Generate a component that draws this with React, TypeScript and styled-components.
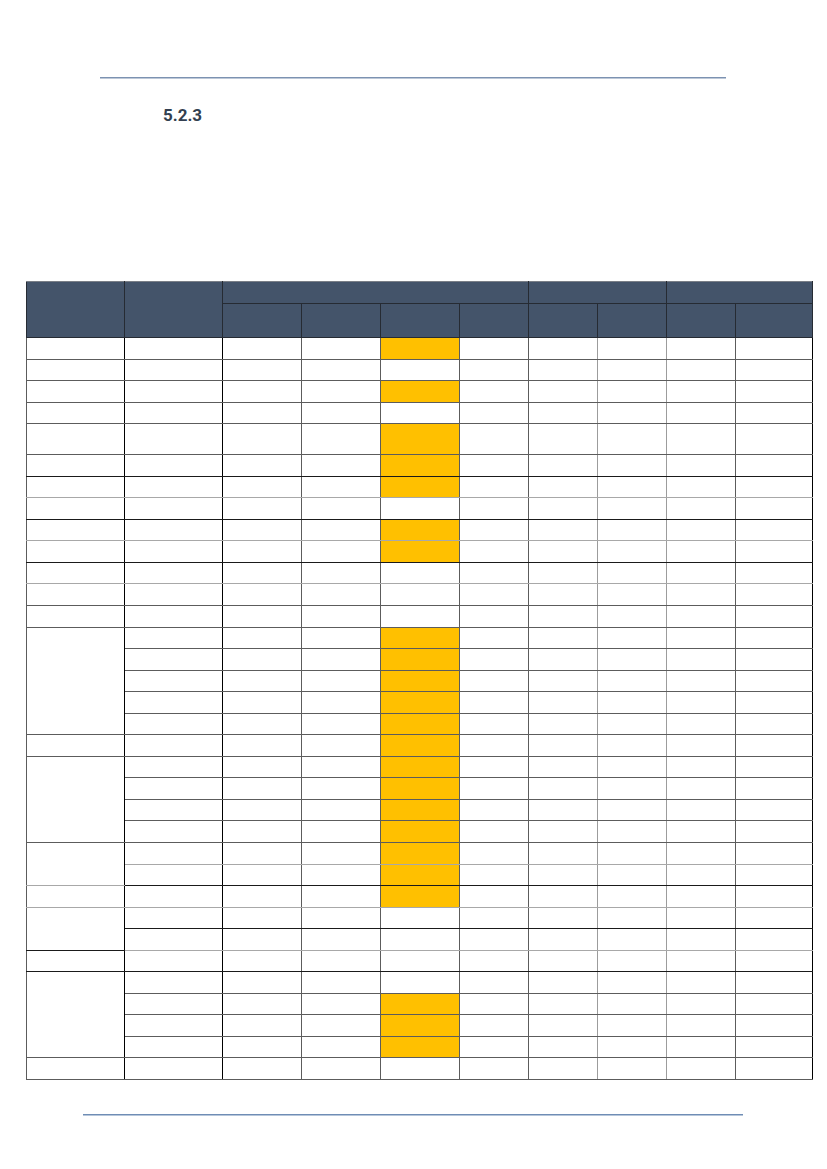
import styled, { createGlobalStyle } from 'styled-components';

const GlobalStyle = createGlobalStyle`
  html, body {
    margin: 0;
    padding: 0;
    background: #ffffff;
  }
  body {
    font-family: Roboto, "Liberation Sans", sans-serif;
  }
`;

const Page = styled.div`
  width: 827px;
  min-height: 1169px;
  padding-top: 77px;
  box-sizing: border-box;
  background: #ffffff;
`;

const Rule = styled.div<{ $left: number; $width: number; $color: string; $gap?: number }>`
  margin: ${(p) => p.$gap ?? 0}px 0 0 ${(p) => p.$left}px;
  width: ${(p) => p.$width}px;
  height: 1px;
  background: ${(p) => p.$color};
  box-shadow: 0 0.5px 0 ${(p) => p.$color};
`;

const Heading = styled.h3`
  margin: 27px 0 0 163px;
  font-family: Roboto, "Liberation Sans", sans-serif;
  font-size: 17px;
  line-height: 20px;
  font-weight: 700;
  color: #333f50;
`;

const Table = styled.table`
  margin: 156px 0 0 26px;
  border-collapse: collapse;
  table-layout: fixed;
  width: 786px;
`;

const HeadRow = styled.tr<{ $h: number }>`
  height: ${(p) => p.$h}px;
`;

const HeadCell = styled.th`
  background: #44546a;
  border: 1px solid #262b33;
  border-top-color: #7a7f87;
  padding: 0;
`;

const BodyRow = styled.tr<{ $h: number; $line?: 'dark' | 'light' }>`
  height: ${(p) => p.$h}px;

  & > td {
    border-bottom-color: ${(p) =>
      p.$line === 'dark' ? '#1a1a1a' : p.$line === 'light' ? '#a8a8a8' : '#5c5c5c'};
  }
`;

const Cell = styled.td<{ $fill?: boolean; $edge?: 'black' | 'soft' }>`
  padding: 0;
  border: 1px solid #5c5c5c;
  background: ${(p) => (p.$fill ? '#ffc000' : '#ffffff')};
  ${(p) => p.$edge === 'black' && 'border-right-color: #000000 !important;'}
  ${(p) => p.$edge === 'soft' && 'border-right-color: #9c9c9c !important;'}

  &:last-child {
    border-right-color: #000000;
  }
`;

const FirstCell = styled(Cell)`
  border-right-color: #000000;
`;

const widths = [98, 98, 79, 79, 79, 69, 69, 69, 69, 77];

type Row = { fill: boolean; span: number; tall?: boolean; line?: 'dark' | 'light' };

// span: rows covered by the first column cell (0 = covered by the one above)
const rows: Row[] = [
  { fill: true, span: 1 },
  { fill: false, span: 1 },
  { fill: true, span: 1 },
  { fill: false, span: 1 },
  { fill: true, span: 1, tall: true },
  { fill: true, span: 1, line: 'dark' },
  { fill: true, span: 1, line: 'light' },
  { fill: false, span: 1, line: 'dark' },
  { fill: true, span: 1, line: 'light' },
  { fill: true, span: 1, line: 'dark' },
  { fill: false, span: 1, line: 'light' },
  { fill: false, span: 1 },
  { fill: false, span: 1 },
  { fill: true, span: 5 },
  { fill: true, span: 0 },
  { fill: true, span: 0 },
  { fill: true, span: 0 },
  { fill: true, span: 0 },
  { fill: true, span: 1 },
  { fill: true, span: 4 },
  { fill: true, span: 0 },
  { fill: true, span: 0 },
  { fill: true, span: 0 },
  { fill: true, span: 2, line: 'light' },
  { fill: true, span: 0, line: 'dark' },
  { fill: true, span: 1, line: 'light' },
  { fill: false, span: 2, line: 'dark' },
  { fill: false, span: 0, line: 'light' },
  { fill: false, span: 1, line: 'dark' },
  { fill: false, span: 4 },
  { fill: true, span: 0 },
  { fill: true, span: 0 },
  { fill: true, span: 0 },
  { fill: false, span: 1 },
];

export default function App() {
  return (
    <>
      <GlobalStyle />
      <Page>
        <Rule $left={100} $width={626} $color="#7c92b1" />
        <Heading>5.2.3</Heading>
        <Table>
          <colgroup>
            {widths.map((w, i) => (
              <col key={i} style={{ width: w }} />
            ))}
          </colgroup>
          <thead>
            <HeadRow $h={21.5}>
              <HeadCell rowSpan={2} />
              <HeadCell rowSpan={2} />
              <HeadCell colSpan={4} />
              <HeadCell colSpan={2} />
              <HeadCell colSpan={2} />
            </HeadRow>
            <HeadRow $h={34.8}>
              {widths.slice(2).map((_, i) => (
                <HeadCell key={i} />
              ))}
            </HeadRow>
          </thead>
          <tbody>
            {rows.map((r, i) => (
              <BodyRow key={i} $h={r.tall ? 30.7 : 21.55} $line={r.line}>
                {r.span > 0 && <FirstCell rowSpan={r.span} />}
                <Cell $edge="black" />
                <Cell />
                <Cell />
                <Cell $fill={r.fill} />
                <Cell />
                <Cell $edge="soft" />
                <Cell $edge="soft" />
                <Cell />
                <Cell />
              </BodyRow>
            ))}
          </tbody>
        </Table>
        <Rule $left={83} $width={660} $color="#6f8db5" $gap={34} />
      </Page>
    </>
  );
}
